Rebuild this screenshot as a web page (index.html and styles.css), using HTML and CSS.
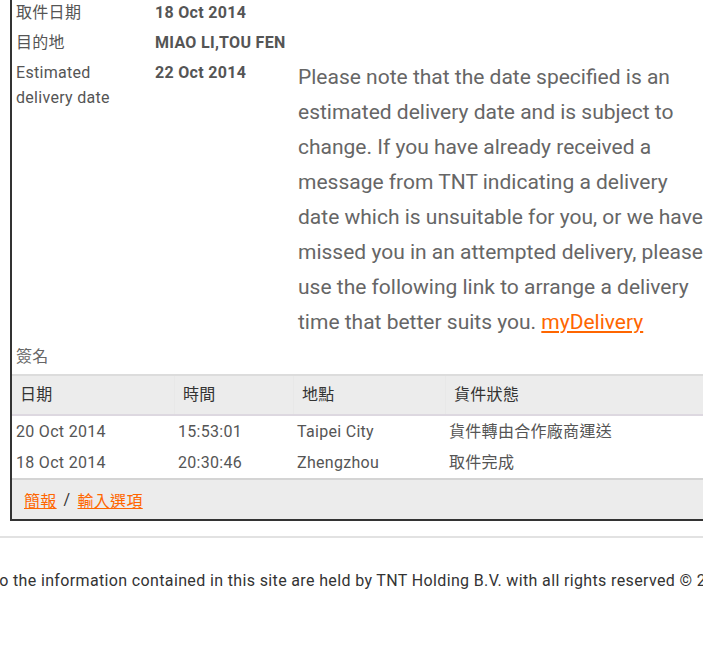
FILE: index.html
```html
<!DOCTYPE html>
<html lang="zh-Hant">
<head>
<meta charset="utf-8">
<title>TNT</title>
<link rel="stylesheet" href="styles.css">
</head>
<body>
<div class="page">
  <div class="box">
    <div class="info">
      <div class="label">取件日期</div>
      <div class="value">18 Oct 2014</div>
      <div class="blank"></div>

      <div class="label">目的地</div>
      <div class="value">MIAO LI,TOU FEN</div>
      <div class="blank"></div>

      <div class="label">Estimated delivery date</div>
      <div class="value">22 Oct 2014</div>
      <p class="note">Please note that the date specified is an estimated delivery date and is subject to change. If you have already received a message from TNT indicating a delivery date which is unsuitable for you, or we have missed you in an attempted delivery, please use the following link to arrange a delivery time that better suits you. <a href="#">myDelivery</a></p>

      <div class="label sign">簽名</div>
    </div>

    <div class="table">
      <div class="thead">
        <div class="th">日期</div>
        <div class="th">時間</div>
        <div class="th">地點</div>
        <div class="th">貨件狀態</div>
      </div>
      <div class="tr">
        <div class="td">20 Oct 2014</div>
        <div class="td">15:53:01</div>
        <div class="td">Taipei City</div>
        <div class="td">貨件轉由合作廠商運送</div>
      </div>
      <div class="tr">
        <div class="td">18 Oct 2014</div>
        <div class="td">20:30:46</div>
        <div class="td">Zhengzhou</div>
        <div class="td">取件完成</div>
      </div>
    </div>

    <div class="links">
      <a href="#">簡報</a><span class="sep">/</span><a href="#">輸入選項</a>
    </div>
  </div>

  <div class="footer">
    <p class="copy">All rights to the information contained in this site are held by TNT Holding B.V. with all rights reserved © 2014</p>
  </div>
</div>
</body>
</html>
```

FILE: styles.css
```css
html, body {
  margin: 0;
  padding: 0;
  background: #fff;
  overflow: hidden;
}

body {
  font-family: Roboto, "Noto Sans CJK TC", sans-serif;
  color: #555;
  width: 703px;
  letter-spacing: 0.3px;
}

.page {
  width: 703px;
  overflow: hidden;
}

.box {
  margin-left: 10px;
  width: 820px;
  border-left: 2px solid #333;
  border-bottom: 2px solid #333;
}

.info {
  display: grid;
  grid-template-columns: 139px 143px 430px;
  padding-left: 4px;
  font-size: 16px;
  line-height: 25px;
}

.label {
  color: #555;
  padding-bottom: 5px;
  padding-right: 12px;
}

.value {
  font-weight: bold;
  color: #555;
  padding-bottom: 5px;
}

.note {
  margin: 0;
  font-size: 21px;
  line-height: 35px;
  color: #666;
  width: 416px;
  letter-spacing: 0;
}

.note a {
  color: #f60;
  text-decoration: underline;
}

.sign {
  grid-column: 1 / 3;
  padding-top: 4px;
  padding-bottom: 5px;
  color: #666;
}

.table {
  font-size: 16px;
}

.thead {
  display: grid;
  grid-template-columns: 162px 119px 152px 1fr;
  background: #ececec;
  border-top: 2px solid #dcdcdc;
  border-bottom: 2px solid #ddd8e0;
  color: #333;
  height: 38px;
  align-items: center;
}

.th {
  padding-left: 8px;
  line-height: 38px;
}

.th + .th {
  border-left: 1px solid #e8e8e8;
}

.tr {
  display: grid;
  grid-template-columns: 162px 119px 152px 1fr;
  line-height: 31px;
  color: #555;
}

.td {
  padding-left: 4px;
}

.tr:first-of-type .td {
  line-height: 30px;
}

.links {
  background: #ececec;
  border-top: 2px solid #d4d4d4;
  height: 39px;
  display: flex;
  align-items: center;
  padding-left: 12px;
  font-size: 16px;
}

.links a {
  color: #f60;
  text-decoration: underline;
}

.sep {
  color: #333;
  margin: 0 7px;
}

.footer {
  margin-top: 15px;
  border-top: 2px solid #e2e2e2;
  padding-top: 32px;
  height: 100px;
}

.copy {
  margin: 0 0 0 -77px;
  white-space: nowrap;
  font-size: 16px;
  line-height: 22px;
  color: #333;
  letter-spacing: 0.36px;
}
```
